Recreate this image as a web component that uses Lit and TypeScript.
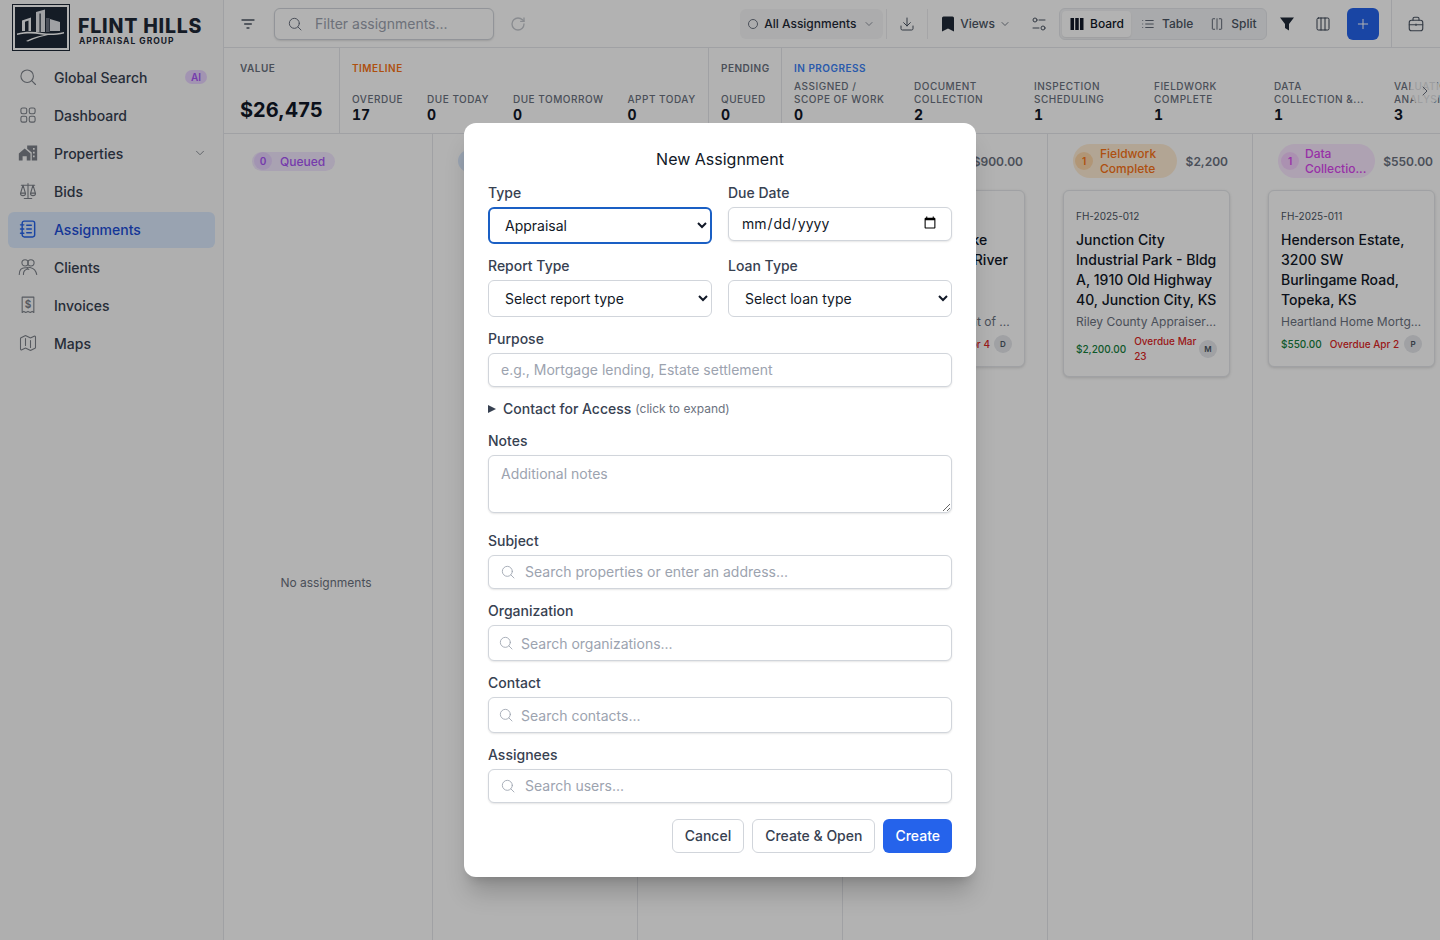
import { LitElement, html, css, svg } from "lit";
import { customElement } from "lit/decorators.js";

const icon = (size: number, body: unknown, sw = 1.5) => html`<svg
  width=${size}
  height=${size}
  viewBox="0 0 24 24"
  fill="none"
  stroke="currentColor"
  stroke-width=${sw}
  stroke-linecap="round"
  stroke-linejoin="round"
  style="flex:none;display:block"
>${body}</svg>`;

const searchBody = svg`<circle cx="11" cy="11" r="7.5"/><path d="m21 21-4.6-4.6"/>`;

const navItems = [
  { label: "Global Search", body: searchBody, badge: true },
  { label: "Dashboard", body: svg`<rect x="3.5" y="3.5" width="7" height="7" rx="2"/><rect x="13.5" y="3.5" width="7" height="7" rx="2"/><rect x="3.5" y="13.5" width="7" height="7" rx="2"/><rect x="13.5" y="13.5" width="7" height="7" rx="2"/>` },
  { label: "Properties", chevron: true, body: svg`<path fill="currentColor" stroke="none" d="M1 12.5 8 6.5l7 6V21h-4.5v-5h-5v5H1zM11 3h12v18h-6.5v-9.5L11 7zM18 6v2h2V6zm0 4.5v2h2v-2zm0 4.5v2h2v-2z" fill-rule="evenodd"/>` },
  { label: "Bids", body: svg`<path d="M12 3v17M7.5 21h9M4 5h16M6 5 3 15c0 1.8 1.4 2.5 3 2.5S9 16.800 9 15zM18 5l-3 10c0 1.800 1.400 2.500 3 2.500s3-.7 3-2.500zM3.200 14.500h5.600M15.200 14.500h5.600"/>` },
  { label: "Assignments", active: true, body: svg`<rect x="5" y="2.500" width="15" height="19" rx="2.500"/><path d="M3 7h4M3 12h4M3 17h4M10.500 7.500h5.500M10.500 12h5.500M10.500 16.500h5.500"/>` },
  { label: "Clients", body: svg`<circle cx="8.500" cy="7" r="3.800"/><circle cx="15.500" cy="7" r="3.800"/><path d="M1.500 21c0-5 2.500-8 7-8 2 0 3.500.7 4.500 1.800M9.500 13.200c1.400-.8 3.600-1.200 6-.2 4 1 6 4 7 8M6.500 21c0-3.500 2-6 5.500-6.500"/>` },
  { label: "Invoices", body: svg`<path d="M5 2.500h14V21l-2-1.300-2.300 1.300-2.700-1.300L9.300 21 7 19.700 5 21z"/><text x="12" y="15.500" text-anchor="middle" font-size="12" font-weight="700" fill="currentColor" stroke="none" font-family="Inter, sans-serif">$</text>` },
  { label: "Maps", body: svg`<path d="M9 6.750V15m6-6v8.250m.503 3.498 4.875-2.437c.381-.19.622-.58.622-1.006V4.820c0-.836-.88-1.380-1.628-1.006l-3.869 1.934c-.317.159-.69.159-1.006 0L9.503 3.252a1.125 1.125 0 0 0-1.006 0L3.622 5.689C3.240 5.880 3 6.270 3 6.695V19.180c0 .836.88 1.380 1.628 1.006l3.869-1.934c.317-.159.69-.159 1.006 0l4.994 2.497c.317.158.69.158 1.006 0Z"/>` },
];

const progress = [
  ["Assigned /", "Scope of Work", "0"],
  ["Document", "Collection", "2"],
  ["Inspection", "Scheduling", "1"],
  ["Fieldwork", "Complete", "1"],
  ["Data", "Collection &...", "1"],
  ["Valuation", "Analysis", "3"],
];

const timeline = [
  ["Overdue", "17"],
  ["Due Today", "0"],
  ["Due Tomorrow", "0"],
  ["Appt Today", "0"],
];

interface Card {
  id: string;
  title: unknown;
  org: string;
  price: string;
  due: string;
  who: string;
}

interface Column {
  name: unknown;
  count: string;
  tone: string;
  total?: string;
  cards: Card[];
}

const columns: Column[] = [
  { name: "Queued", count: "0", tone: "t-queued", cards: [] },
  { name: "Assigned / Scope of Work", count: "0", tone: "t-blue", total: "$0.00", cards: [] },
  { name: "Document Collection", count: "2", tone: "t-teal", total: "$1,200", cards: [] },
  {
    name: "Inspection",
    count: "1",
    tone: "t-amber",
    total: "$900.00",
    cards: [
      {
        id: "FH-2025-013",
        title: html`Tuttle Creek Lake<br />Parcel 12, Bluff River<br />Road,<br />Manhattan, KS`,
        org: "Marion Department of ...",
        price: "$900.00",
        due: "Overdue Apr 4",
        who: "D",
      },
    ],
  },
  {
    name: html`Fieldwork<br />Complete`,
    count: "1",
    tone: "t-orange",
    total: "$2,200",
    cards: [
      {
        id: "FH-2025-012",
        title: "Junction City Industrial Park - Bldg A, 1910 Old Highway 40, Junction City, KS",
        org: "Riley County Appraiser's Office",
        price: "$2,200.00",
        due: "Overdue Mar 23",
        who: "M",
      },
    ],
  },
  {
    name: html`Data<br />Collectio...`,
    count: "1",
    tone: "t-fuchsia",
    total: "$550.00",
    cards: [
      {
        id: "FH-2025-011",
        title: "Henderson Estate, 3200 SW Burlingame Road, Topeka, KS",
        org: "Heartland Home Mortgage",
        price: "$550.00",
        due: "Overdue Apr 2",
        who: "P",
      },
    ],
  },
];

@customElement("app-root")
export class AppRoot extends LitElement {
  static styles = css`
    :host {
      display: block;
      width: 1440px;
      height: 940px;
      overflow: hidden;
      position: relative;
      font-family: Inter, "Liberation Sans", sans-serif;
      font-size: 14px;
      color: #111827;
      background: #fff;
    }
    * {
      box-sizing: border-box;
    }
    .shell {
      display: flex;
      height: 100%;
    }

    /* sidebar */
    .side {
      width: 224px;
      flex: none;
      background: #fbfbfb;
      border-right: 1px solid #e5e7eb;
      padding: 4px 8px 0;
    }
    .brand {
      display: flex;
      align-items: center;
      gap: 8px;
      height: 46px;
      padding-left: 4px;
      margin-bottom: 10px;
    }
    .brand-name {
      display: flex;
      flex-direction: column;
      color: #1f2937;
      white-space: nowrap;
    }
    .brand-name b {
      font-size: 19.500px;
      line-height: 20px;
      font-weight: 800;
      letter-spacing: 0.800px;
      margin-top: 7px;
    }
    .brand-name span {
      font-size: 8.500px;
      line-height: 10px;
      font-weight: 700;
      letter-spacing: 1px;
      padding-left: 1px;
    }
    .nav {
      display: flex;
      flex-direction: column;
      gap: 2px;
    }
    .nav-item {
      display: flex;
      align-items: center;
      height: 36px;
      border-radius: 6px;
      padding: 0 8px 2px 10px;
      gap: 16px;
      font-weight: 500;
      color: #374151;
    }
    .nav-item svg {
      color: #7d828a;
    }
    .nav-item.active {
      background: #dbeafe;
      color: #1d4ed8;
    }
    .nav-item.active svg {
      color: #2563eb;
    }
    .nav-item .grow {
      flex: 1;
    }
    .ai {
      background: #e9d5ff;
      color: #a855f7;
      font-size: 10px;
      font-weight: 600;
      border-radius: 8px;
      padding: 1px 6px;
      line-height: 12px;
    }

    /* main */
    .main {
      flex: 1;
      min-width: 0;
      display: flex;
      flex-direction: column;
    }
    .top {
      height: 48px;
      flex: none;
      display: flex;
      align-items: center;
      border-bottom: 1px solid #e5e7eb;
      padding-left: 16px;
      color: #4b5563;
    }
    .filter-box {
      width: 220px;
      height: 32px;
      margin-left: 18px;
      border: 1px solid #d1d5db;
      border-radius: 6px;
      box-shadow: 0 1px 2px rgba(0, 0, 0, 0.12);
      display: flex;
      align-items: center;
      padding-left: 12px;
      gap: 12px;
      color: #9ca3af;
      background: #fff;
    }
    .filter-box svg {
      color: #6b7280;
    }
    .refresh {
      margin-left: 16px;
      color: #c4c8ce;
    }
    .grow {
      flex: 1;
    }
    .all {
      width: 143px;
      height: 30px;
      background: #f7f7f8;
      border-radius: 6px;
      display: flex;
      align-items: center;
      padding-left: 8px;
      font-size: 12px;
      font-weight: 500;
      color: #1f2937;
      white-space: nowrap;
    }
    .dot {
      width: 10px;
      height: 10px;
      border: 1px solid #6b7280;
      border-radius: 50%;
      margin-right: 6px;
    }
    .all svg {
      margin-left: 7px;
      color: #6b7280;
    }
    .rule {
      width: 1px;
      height: 30px;
      background: #ececef;
    }
    .rule.first {
      margin-left: 3px;
    }
    .download {
      margin: 0 12px;
    }
    .views {
      display: flex;
      align-items: center;
      font-size: 12px;
      font-weight: 500;
      color: #4b5563;
      margin-left: 13px;
    }
    .views span {
      margin: 0 4px 0 5px;
    }
    .sliders {
      margin-left: 20px;
    }
    .seg {
      width: 208px;
      height: 32px;
      margin-left: 12px;
      border: 1px solid #e5e7eb;
      border-radius: 6px;
      background: #f3f4f6;
      display: flex;
      align-items: center;
      padding: 2px;
      font-size: 12px;
      font-weight: 500;
      color: #4b5563;
    }
    .seg div {
      display: flex;
      align-items: center;
      gap: 7px;
      height: 26px;
      border-radius: 4px;
      padding: 0 10px 0 8px;
    }
    .seg .on {
      background: #fff;
      color: #111827;
      box-shadow: 0 1px 2px rgba(0, 0, 0, 0.08);
      width: 69px;
      gap: 6px;
    }
    .seg .tbl {
      padding-left: 10px;
    }
    .seg .spl {
      padding-left: 7px;
    }
    .funnel {
      margin-left: 12px;
      color: #1f2937;
    }
    .cols {
      margin-left: 20px;
      color: #374151;
    }
    .plus {
      width: 32px;
      height: 32px;
      margin-left: 16px;
      background: #2563eb;
      border-radius: 6px;
      display: flex;
      align-items: center;
      justify-content: center;
      color: #fff;
    }
    .brief {
      width: 49px;
      height: 48px;
      margin-left: 12px;
      border-left: 1px solid #e5e7eb;
      display: flex;
      align-items: center;
      justify-content: center;
      color: #4b5563;
    }

    /* stats strip */
    .stats {
      height: 86px;
      flex: none;
      display: flex;
      border-bottom: 1px solid #e5e7eb;
      overflow: hidden;
      position: relative;
    }
    .sec {
      flex: none;
      padding: 14px 12px 12px 12px;
      border-right: 1px solid #e5e7eb;
      display: flex;
      flex-direction: column;
      justify-content: space-between;
    }
    .sec.value {
      width: 116px;
      padding-left: 16px;
    }
    .sec.time {
      width: 369px;
    }
    .sec.pend {
      width: 73px;
    }
    .sec.prog {
      border-right: none;
    }
    .head {
      font-size: 10px;
      line-height: 12px;
      font-weight: 600;
      letter-spacing: 0.5px;
      text-transform: uppercase;
      color: #6b7280;
    }
    .head.h-orange {
      color: #f97316;
    }
    .head.h-blue {
      color: #3b82f6;
    }
    .big {
      font-size: 20px;
      line-height: 26px;
      font-weight: 700;
      margin-bottom: -2px;
    }
    .row {
      display: flex;
      gap: 24px;
    }
    .stat {
      display: flex;
      flex-direction: column;
      justify-content: flex-end;
      white-space: nowrap;
    }
    .stat.wide {
      width: 96px;
    }
    .stat small {
      font-size: 10px;
      line-height: 13px;
      font-weight: 500;
      letter-spacing: 0.5px;
      text-transform: uppercase;
      color: #6b7280;
    }
    .stat b {
      font-size: 14px;
      line-height: 16px;
      margin-top: 1px;
      margin-bottom: -2px;
      font-variant-numeric: tabular-nums;
    }
    .scroll {
      position: absolute;
      right: 0;
      top: 28px;
      width: 30px;
      height: 30px;
      border-radius: 50%;
      background: rgba(255, 255, 255, 0.8);
      display: flex;
      align-items: center;
      justify-content: center;
      color: #6b7280;
    }

    /* board */
    .board {
      flex: 1;
      min-height: 0;
      display: flex;
      overflow: hidden;
    }
    .col {
      width: 205px;
      flex: none;
      border-right: 1px solid #e5e7eb;
      padding: 0 22px 0 15px;
      display: flex;
      flex-direction: column;
    }
    .col.first {
      width: 209px;
      padding-left: 18px;
    }
    .col-head {
      height: 56px;
      flex: none;
      display: flex;
      align-items: center;
      justify-content: space-between;
      padding: 0 2px 2px 10px;
      font-size: 12px;
      font-weight: 600;
      color: #6b7280;
      white-space: nowrap;
    }
    .pill {
      display: flex;
      align-items: center;
      gap: 7px;
      padding: 0 10px 0 2px;
      border-radius: 17px;
      font-weight: 500;
      line-height: 15px;
      min-height: 19px;
    }
    .pill.double {
      padding-top: 2px;
      padding-bottom: 2px;
    }
    .pill.t-queued {
      gap: 8px;
    }
    .pill.t-orange {
      padding-right: 21px;
    }
    .pill.t-fuchsia {
      padding-left: 3px;
      gap: 6px;
      padding-right: 9px;
    }
    .pill i {
      width: 18px;
      height: 18px;
      border-radius: 50%;
      font-style: normal;
      font-size: 10px;
      font-weight: 600;
      display: flex;
      align-items: center;
      justify-content: center;
    }
    .t-queued {
      background: #f3e8ff;
      color: #a855f7;
    }
    .t-queued i {
      background: #e9d5ff;
    }
    .t-blue {
      background: #dbeafe;
      color: #3b82f6;
    }
    .t-teal {
      background: #ccfbf1;
      color: #0d9488;
    }
    .t-amber {
      background: #fef3c7;
      color: #d97706;
    }
    .t-orange {
      background: #ffedd5;
      color: #f97316;
    }
    .t-orange i {
      background: #fed7aa;
    }
    .t-fuchsia {
      background: #fae8ff;
      color: #d946ef;
    }
    .t-fuchsia i {
      background: #f5d0fe;
    }
    .empty {
      flex: 1;
      display: flex;
      align-items: center;
      justify-content: center;
      font-size: 12px;
      color: #6b7280;
      padding-top: 34px;
    }
    .card {
      background: #fff;
      border: 1px solid #e5e7eb;
      border-radius: 6px;
      box-shadow: 0 1px 3px rgba(0, 0, 0, 0.14);
      padding: 18px 12px 13px;
      width: 167px;
      flex: none;
    }
    .card-id {
      font-size: 10px;
      line-height: 14px;
      color: #4b5563;
      margin-bottom: 7px;
    }
    .card-title {
      font-weight: 500;
      line-height: 20px;
      margin-bottom: 3px;
    }
    .card-org {
      font-size: 12px;
      line-height: 18px;
      color: #6b7280;
      white-space: nowrap;
      overflow: hidden;
      text-overflow: ellipsis;
    }
    .card-foot {
      display: flex;
      align-items: center;
      font-size: 10px;
      line-height: 15px;
      font-weight: 500;
      margin-top: 4px;
      min-height: 18px;
    }
    .price {
      color: #15803d;
      white-space: nowrap;
      margin-right: 8px;
    }
    .due {
      color: #dc2626;
      flex: 1;
      margin: -1px 0;
    }
    .who {
      width: 18px;
      height: 18px;
      flex: none;
      border-radius: 50%;
      background: #e5e7eb;
      color: #4b5563;
      font-size: 8px;
      font-weight: 600;
      display: flex;
      align-items: center;
      justify-content: center;
    }

    /* modal */
    .overlay {
      position: absolute;
      inset: 0;
      background: rgba(0, 0, 0, 0.3);
      display: flex;
      justify-content: center;
      align-items: flex-start;
      padding-top: 123px;
    }
    .modal {
      width: 512px;
      height: 754px;
      background: #fff;
      border-radius: 12px;
      padding: 24px;
      box-shadow: 0 20px 25px -5px rgba(0, 0, 0, 0.2), 0 8px 10px -6px rgba(0, 0, 0, 0.15);
      display: flex;
      flex-direction: column;
      color: #111827;
    }
    .modal h2 {
      margin: 0 0 12px;
      font-size: 16px;
      line-height: 24px;
      font-weight: 400;
      text-align: center;
    }
    .pair {
      display: grid;
      grid-template-columns: 1fr 1fr;
      gap: 16px;
    }
    .field {
      display: flex;
      flex-direction: column;
      margin-bottom: 12px;
      align-items: stretch;
    }
    label,
    summary {
      font-size: 14px;
      line-height: 20px;
      font-weight: 500;
      color: #374151;
    }
    label {
      margin-bottom: 4px;
    }
    select,
    input,
    textarea {
      width: 100%;
      font: inherit;
      font-size: 14px;
      color: #111827;
      background: #fff;
      border: 1px solid #d1d5db;
      border-radius: 6px;
      box-shadow: 0 1px 2px rgba(0, 0, 0, 0.1);
      outline: none;
      display: block;
    }
    input::placeholder,
    textarea::placeholder {
      color: #9ca3af;
      opacity: 1;
    }
    select {
      height: 37px;
      padding: 0 0 0 12px;
      box-shadow: none;
    }
    select.focus {
      border: 2px solid #1a5fc4;
      padding-left: 11px;
    }
    input {
      height: 34px;
      padding: 0 12px 2px;
    }
    input[type="date"] {
      padding: 0 12px 2px 12px;
    }
    textarea {
      height: 58px;
      padding: 8px 12px;
      resize: vertical;
      margin-bottom: 6px;
      line-height: 20px;
    }
    details {
      margin-bottom: 12px;
      height: 20px;
    }
    summary {
      display: flex;
      align-items: center;
      list-style: none;
      height: 20px;
    }
    .tri {
      width: 0;
      height: 0;
      border-left: 8px solid #374151;
      border-top: 4.500px solid transparent;
      border-bottom: 4.500px solid transparent;
      margin-right: 7px;
    }
    summary small {
      font-size: 12px;
      line-height: 16px;
      font-weight: 400;
      color: #6b7280;
      margin-left: 4px;
    }
    .find {
      position: relative;
      display: block;
    }
    .find svg {
      position: absolute;
      left: 12px;
      top: 9px;
      color: #9ca3af;
    }
    .find input {
      padding-left: 36px;
    }
    .find.tall input {
      height: 36px;
      padding-left: 32px;
      padding-bottom: 0;
    }
    .find.tall svg {
      left: 10px;
      top: 10px;
    }
    .actions {
      display: flex;
      justify-content: flex-end;
      gap: 8px;
      margin-top: 4px;
    }
    button {
      height: 34px;
      font: inherit;
      font-size: 14px;
      font-weight: 500;
      padding: 0 12px 2px;
      border-radius: 6px;
      border: 1px solid #d1d5db;
      background: #fff;
      color: #374151;
    }
    button.primary {
      background: #2563eb;
      border: none;
      color: #fff;
    }
  `;

  private _logo() {
    return html`<svg width="58" height="47" viewBox="0 0 58 47" style="flex:none;display:block">
      <rect x="0.500" y="0.500" width="57" height="46" fill="#fff" stroke="#1f2937" />
      <rect x="3" y="3" width="52" height="41" fill="#1f2937" />
      <path fill="#f3f4f6" d="M10 27V16.500L19 13.500V27h-2.500V16.500L13 17.700V27z" />
      <path fill="#e5e7eb" d="M24 28V8L33 5.500V28z" />
      <path fill="#1f2937" d="M27.500 28V9.500h1.200V28z" />
      <path fill="#6b7280" d="M34 28V14h3.500v14z" />
      <path fill="#e5e7eb" d="M38 27V15l10 3V27z" />
      <path fill="#fff" d="M5 29.500c9-2.500 17-2 25-.5 7 1 14 .8 22-1v1.400c-8 2-16 2-23 1-8-1.300-15-1.300-24 .6zM14 37c7-3.500 15-6 26-7-8 1.700-16 4-24 7.500z" />
    </svg>`;
  }

  private _top() {
    const chev = icon(12, svg`<path d="m6 9 6 6 6-6"/>`);
    return html`<div class="top">
      ${icon(16, svg`<path d="M3 6h18M7 12h10M10.500 18h3"/>`, 2)}
      <div class="filter-box">${icon(16, searchBody)}<span>Filter assignments...</span></div>
      <div class="refresh">
        ${icon(16, svg`<path d="M21 12a9 9 0 1 1-9-9c2.520 0 4.930 1 6.740 2.740L21 8"/><path d="M21 3v5h-5"/>`, 2)}
      </div>
      <div class="grow"></div>
      <div class="all"><span class="dot"></span>All Assignments${chev}</div>
      <div class="rule first"></div>
      <div class="download">
        ${icon(16, svg`<path d="M21 15v4a2 2 0 0 1-2 2H5a2 2 0 0 1-2-2v-4M7 10l5 5 5-5M12 15V3"/>`)}
      </div>
      <div class="rule"></div>
      <div class="views">
        <svg width="14" height="16" viewBox="0 0 14 16" style="display:block">
          <path fill="#1f2937" d="M1 2a1.500 1.500 0 0 1 1.500-1.500h9A1.500 1.500 0 0 1 13 2v13.500l-6-3-6 3z" />
        </svg>
        <span>Views</span>${chev}
      </div>
      <div class="sliders">
        ${icon(16, svg`<path d="M12 6h9M3 18h9"/><circle cx="6" cy="6" r="3"/><circle cx="18" cy="18" r="3"/>`)}
      </div>
      <div class="seg">
        <div class="on">
          <svg width="14" height="12" viewBox="0 0 14 12" style="display:block;flex:none">
            <path fill="#111827" d="M.5 0h3.500v12H.5zM5.250 0h3.500v12h-3.500zM10 0h3.500v12H10z" />
          </svg>
          Board
        </div>
        <div class="tbl">${icon(14, svg`<path d="M8 6h13M8 12h13M8 18h13M3 6h.01M3 12h.01M3 18h.01"/>`)}Table</div>
        <div class="spl">
          ${icon(14, svg`<path d="M8 3H5a1 1 0 0 0-1 1v16a1 1 0 0 0 1 1h3M16 3h3a1 1 0 0 1 1 1v16a1 1 0 0 1-1 1h-3M12 3v18"/>`)}Split
        </div>
      </div>
      <div class="funnel">
        <svg width="16" height="16" viewBox="0 0 16 16" style="display:block">
          <path fill="currentColor" d="M1 1.500h14L10 8v6.500L6 12V8z" />
        </svg>
      </div>
      <div class="cols">
        ${icon(16, svg`<rect x="3" y="3" width="18" height="18" rx="2"/><path d="M9 3v18M15 3v18"/>`)}
      </div>
      <div class="plus">${icon(16, svg`<path d="M12 5v14M5 12h14"/>`)}</div>
      <div class="brief">
        ${icon(18, svg`<rect x="3" y="7" width="18" height="14" rx="3"/><path d="M8 7V5a2 2 0 0 1 2-2h4a2 2 0 0 1 2 2v2M3 13h18M12 12v2"/>`)}
      </div>
    </div>`;
  }

  private _stats() {
    return html`<div class="stats">
      <div class="sec value">
        <div class="head">Value</div>
        <div class="big">$26,475</div>
      </div>
      <div class="sec time">
        <div class="head h-orange">Timeline</div>
        <div class="row">
          ${timeline.map(([k, v]) => html`<div class="stat"><small>${k}</small><b>${v}</b></div>`)}
        </div>
      </div>
      <div class="sec pend">
        <div class="head">Pending</div>
        <div class="stat"><small>Queued</small><b>0</b></div>
      </div>
      <div class="sec prog">
        <div class="head h-blue">In Progress</div>
        <div class="row">
          ${progress.map(
            ([a, b, v]) => html`<div class="stat wide"><small>${a}</small><small>${b}</small><b>${v}</b></div>`
          )}
        </div>
      </div>
      <div class="scroll">${icon(16, svg`<path d="m9 6 6 6-6 6"/>`)}</div>
    </div>`;
  }

  private _column(c: Column, i: number) {
    return html`<div class="col ${i === 0 ? "first" : ""}">
      <div class="col-head">
        <div class="pill ${c.tone} ${i >= 1 ? "double" : ""}"><i>${c.count}</i><span>${c.name}</span></div>
        ${c.total ? html`<span>${c.total}</span>` : ""}
      </div>
      ${i === 0 ? html`<div class="empty">No assignments</div>` : ""}
      ${c.cards.map(
        (k) => html`<div class="card">
          <div class="card-id">${k.id}</div>
          <div class="card-title">${k.title}</div>
          <div class="card-org">${k.org}</div>
          <div class="card-foot">
            <span class="price">${k.price}</span>
            <span class="due">${k.due}</span>
            <span class="who">${k.who}</span>
          </div>
        </div>`
      )}
    </div>`;
  }

  private _find(label: string, placeholder: string, tall = false) {
    return html`<div class="field">
      <label>${label}</label>
      <span class="find ${tall ? "tall" : ""}">${icon(16, searchBody, 1.300)}<input placeholder=${placeholder} /></span>
    </div>`;
  }

  private _modal() {
    return html`<div class="overlay">
      <div class="modal">
        <h2>New Assignment</h2>
        <div class="pair">
          <div class="field">
            <label>Type</label>
            <select class="focus"><option>Appraisal</option></select>
          </div>
          <div class="field">
            <label>Due Date</label>
            <input type="date" />
          </div>
        </div>
        <div class="pair">
          <div class="field">
            <label>Report Type</label>
            <select><option>Select report type</option></select>
          </div>
          <div class="field">
            <label>Loan Type</label>
            <select><option>Select loan type</option></select>
          </div>
        </div>
        <div class="field">
          <label>Purpose</label>
          <input placeholder="e.g., Mortgage lending, Estate settlement" />
        </div>
        <details>
          <summary><span class="tri"></span>Contact for Access<small>(click to expand)</small></summary>
        </details>
        <div class="field">
          <label>Notes</label>
          <textarea placeholder="Additional notes"></textarea>
        </div>
        ${this._find("Subject", "Search properties or enter an address...")}
        ${this._find("Organization", "Search organizations...", true)}
        ${this._find("Contact", "Search contacts...", true)}
        ${this._find("Assignees", "Search users...")}
        <div class="actions">
          <button>Cancel</button>
          <button>Create &amp; Open</button>
          <button class="primary">Create</button>
        </div>
      </div>
    </div>`;
  }

  render() {
    return html`<div class="shell">
        <aside class="side">
          <div class="brand">
            ${this._logo()}
            <div class="brand-name"><b>FLINT HILLS</b><span>APPRAISAL GROUP</span></div>
          </div>
          <nav class="nav">
            ${navItems.map(
              (n) => html`<div class="nav-item ${n.active ? "active" : ""}">
                ${icon(20, n.body, n.active ? 1.700 : 1.300)}
                <span class="grow">${n.label}</span>
                ${n.badge ? html`<span class="ai">AI</span>` : ""}
                ${n.chevron ? icon(14, svg`<path d="m6 9 6 6 6-6"/>`) : ""}
              </div>`
            )}
          </nav>
        </aside>
        <main class="main">
          ${this._top()} ${this._stats()}
          <div class="board">${columns.map((c, i) => this._column(c, i))}</div>
        </main>
      </div>
      ${this._modal()}`;
  }
}
